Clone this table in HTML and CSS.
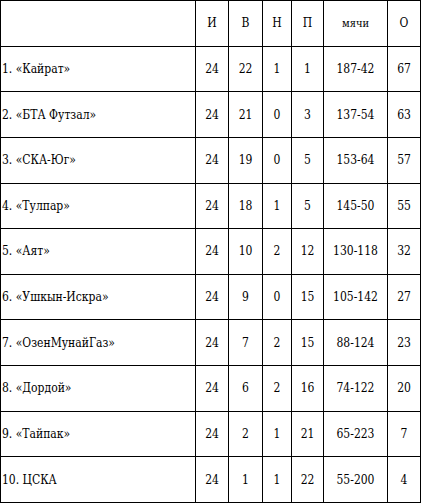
FILE: index.html
```html
<!DOCTYPE html>
<html>
<head>
<meta charset="utf-8">
<link rel="stylesheet" href="styles.css">
</head>
<body>
<table class="standings">
  <colgroup>
    <col class="c-name"><col class="c-i"><col class="c-v"><col class="c-n"><col class="c-p"><col class="c-goals"><col class="c-o">
  </colgroup>
  <tr><td></td><td>И</td><td>В</td><td>Н</td><td>П</td><td class="small">мячи</td><td>О</td></tr>
  <tr><td class="team">1. «Кайрат»</td><td>24</td><td>22</td><td>1</td><td>1</td><td>187-42</td><td>67</td></tr>
  <tr><td class="team">2. «БТА Футзал»</td><td>24</td><td>21</td><td>0</td><td>3</td><td>137-54</td><td>63</td></tr>
  <tr><td class="team">3. «СКА-Юг»</td><td>24</td><td>19</td><td>0</td><td>5</td><td>153-64</td><td>57</td></tr>
  <tr><td class="team">4. «Тулпар»</td><td>24</td><td>18</td><td>1</td><td>5</td><td>145-50</td><td>55</td></tr>
  <tr><td class="team">5. «Аят»</td><td>24</td><td>10</td><td>2</td><td>12</td><td>130-118</td><td>32</td></tr>
  <tr><td class="team">6. «Ушкын-Искра»</td><td>24</td><td>9</td><td>0</td><td>15</td><td>105-142</td><td>27</td></tr>
  <tr><td class="team">7. «ОзенМунайГаз»</td><td>24</td><td>7</td><td>2</td><td>15</td><td>88-124</td><td>23</td></tr>
  <tr><td class="team">8. «Дордой»</td><td>24</td><td>6</td><td>2</td><td>16</td><td>74-122</td><td>20</td></tr>
  <tr><td class="team">9. «Тайпак»</td><td>24</td><td>2</td><td>1</td><td>21</td><td>65-223</td><td>7</td></tr>
  <tr><td class="team">10. ЦСКА</td><td>24</td><td>1</td><td>1</td><td>22</td><td>55-200</td><td>4</td></tr>
</table>
</body>
</html>
```
FILE: styles.css
```css
html, body {
  margin: 0;
  padding: 0;
  background: #fff;
}
.standings {
  border-collapse: collapse;
  table-layout: fixed;
  width: 421px;
  height: 503px;
  color: #000;
}
.standings td {
  font-family: "DejaVu Serif Condensed", "DejaVu Serif", serif;
  font-stretch: condensed;
  font-size: 12px;
  border: 1px solid #000;
  text-align: center;
  vertical-align: middle;
  padding: 0 2px;
  white-space: nowrap;
}
.standings td.small {
  font-size: 11px;
}
.standings td.team {
  text-align: left;
  padding-left: 1px;
}
.c-name { width: 195px; }
.c-i { width: 33px; }
.c-v { width: 34px; }
.c-n { width: 29px; }
.c-p { width: 32px; }
.c-goals { width: 64px; }
.c-o { width: 33px; }
```
